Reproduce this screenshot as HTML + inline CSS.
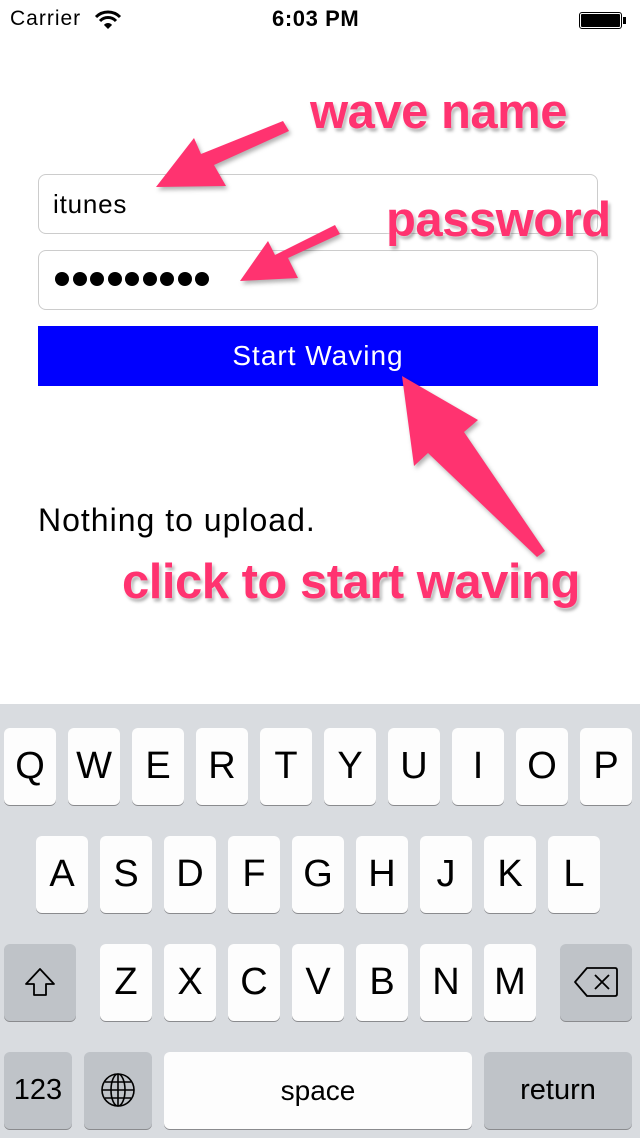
<!DOCTYPE html>
<html><head><meta charset="utf-8"><style>
*{margin:0;padding:0;box-sizing:border-box}
body{width:640px;height:1138px;overflow:hidden;background:#fff;font-family:"Liberation Sans",sans-serif;position:relative}
.a{position:absolute}
.field{position:absolute;left:38px;width:560px;border:1px solid #ccc;border-radius:8px;background:#fff}
.lbl{position:absolute;color:#ff3370;font-weight:bold;font-size:49px;text-shadow:0 0 3px #fff,2px 3px 3px rgba(0,0,0,.35);letter-spacing:-0.5px;white-space:nowrap}
.kb{position:absolute;left:0;top:704px;width:640px;height:434px;background:#d9dce0}
.k{position:absolute;width:52px;height:77px;background:#fdfdfd;border-radius:6px;box-shadow:0 1px 0 #8a8b8e;font-size:38px;text-align:center;line-height:77px;color:#000}
.g{background:#bfc3c8}
.d{position:absolute;top:272px;width:14px;height:14px;border-radius:50%;background:#000}
</style></head><body>
<div class="a" style="left:10px;top:7px;font-size:21px;letter-spacing:1px">Carrier</div>
<svg class="a" style="left:94px;top:10px" width="28" height="20" viewBox="0 0 28 20"><path d="M2 7 A17 17 0 0 1 26 7" stroke="#000" stroke-width="3" fill="none"/><path d="M6 11 A11 11 0 0 1 22 11" stroke="#000" stroke-width="3" fill="none"/><path d="M10 15 A5 5 0 0 1 18 15 L14 19Z" fill="#000"/></svg>
<div class="a" style="left:272px;top:6px;font-size:22px;font-weight:bold;letter-spacing:0.6px">6:03 PM</div>
<div class="a" style="left:579px;top:12px;width:43px;height:17px;border:1px solid #000;border-radius:3px;padding:1px"><div style="width:100%;height:100%;background:#000;border-radius:1px"></div></div>
<div class="a" style="left:623px;top:17px;width:3px;height:7px;background:#000"></div>

<div class="field" style="top:174px;height:60px"><div style="position:absolute;left:14px;top:14px;font-size:26px;letter-spacing:0.8px">itunes</div></div>
<div class="field" style="top:250px;height:60px"></div>
<div class="d" style="left:55px"></div><div class="d" style="left:72.5px"></div><div class="d" style="left:90px"></div><div class="d" style="left:107.5px"></div><div class="d" style="left:125px"></div><div class="d" style="left:142.5px"></div><div class="d" style="left:160px"></div><div class="d" style="left:177.5px"></div><div class="d" style="left:195px"></div>
<div class="a" style="left:38px;top:326px;width:560px;height:60px;background:#0000ff;color:#fff;font-size:28px;text-align:center;line-height:60px;letter-spacing:1px">Start Waving</div>
<div class="a" style="left:38px;top:502px;font-size:32px;letter-spacing:1px">Nothing to upload.</div>

<div class="lbl" style="left:310px;top:84px">wave name</div>
<div class="lbl" style="left:386px;top:192px">password</div>
<div class="lbl" style="left:122px;top:554px">click to start waving</div>
<svg class="a" style="left:0;top:0" width="640" height="700" viewBox="0 0 640 700">
<g fill="#ff3370" style="filter:drop-shadow(2px 3px 2px rgba(0,0,0,.3))">
<path d="M283 121 L289 131 L214 165 L226 186 L156 187 L194 138 L201 154 Z"/>
<path d="M335 225 L340 234 L288 258 L298 278 L240 281 L268 241 L275 255 Z"/>
<path d="M537 557 L545 551 L464 432 L478 420 L402 376 L414 466 L428 453 Z"/>
</g></svg>

<div class="kb">
<div class="k" style="left:4px;top:24px">Q</div><div class="k" style="left:68px;top:24px">W</div><div class="k" style="left:132px;top:24px">E</div><div class="k" style="left:196px;top:24px">R</div><div class="k" style="left:260px;top:24px">T</div><div class="k" style="left:324px;top:24px">Y</div><div class="k" style="left:388px;top:24px">U</div><div class="k" style="left:452px;top:24px">I</div><div class="k" style="left:516px;top:24px">O</div><div class="k" style="left:580px;top:24px">P</div>
<div class="k" style="left:36px;top:132px">A</div><div class="k" style="left:100px;top:132px">S</div><div class="k" style="left:164px;top:132px">D</div><div class="k" style="left:228px;top:132px">F</div><div class="k" style="left:292px;top:132px">G</div><div class="k" style="left:356px;top:132px">H</div><div class="k" style="left:420px;top:132px">J</div><div class="k" style="left:484px;top:132px">K</div><div class="k" style="left:548px;top:132px">L</div>
<div class="k g" style="left:4px;top:240px;width:72px"><svg width="32" height="32" viewBox="0 0 32 32" style="margin-top:22px"><path d="M16 3 L30 18 L22 18 L22 29 L10 29 L10 18 L2 18 Z" fill="none" stroke="#000" stroke-width="1.8" stroke-linejoin="round"/></svg></div>
<div class="k" style="left:100px;top:240px">Z</div><div class="k" style="left:164px;top:240px">X</div><div class="k" style="left:228px;top:240px">C</div><div class="k" style="left:292px;top:240px">V</div><div class="k" style="left:356px;top:240px">B</div><div class="k" style="left:420px;top:240px">N</div><div class="k" style="left:484px;top:240px">M</div>
<div class="k g" style="left:560px;top:240px;width:72px"><svg width="46" height="32" viewBox="0 0 46 32" style="margin-top:22px"><path d="M14 2 L42 2 Q44 2 44 4 L44 28 Q44 30 42 30 L14 30 L2 16 Z" fill="none" stroke="#000" stroke-width="1.8" stroke-linejoin="round"/><path d="M22 9 L36 23 M36 9 L22 23" stroke="#000" stroke-width="1.8"/></svg></div>
<div class="k g" style="left:4px;top:348px;width:68px;font-size:29px">123</div>
<div class="k g" style="left:84px;top:348px;width:68px"><svg width="36" height="36" viewBox="0 0 36 36" style="margin-top:20px" fill="none" stroke="#000" stroke-width="1.6"><circle cx="18" cy="18" r="16"/><ellipse cx="18" cy="18" rx="7" ry="16"/><path d="M18 2V34M2 18H34M5 10H31M5 26H31"/></svg></div>
<div class="k" style="left:164px;top:348px;width:308px;font-size:28px">space</div>
<div class="k g" style="left:484px;top:348px;width:148px;font-size:29px">return</div>
</div>
</body></html>
